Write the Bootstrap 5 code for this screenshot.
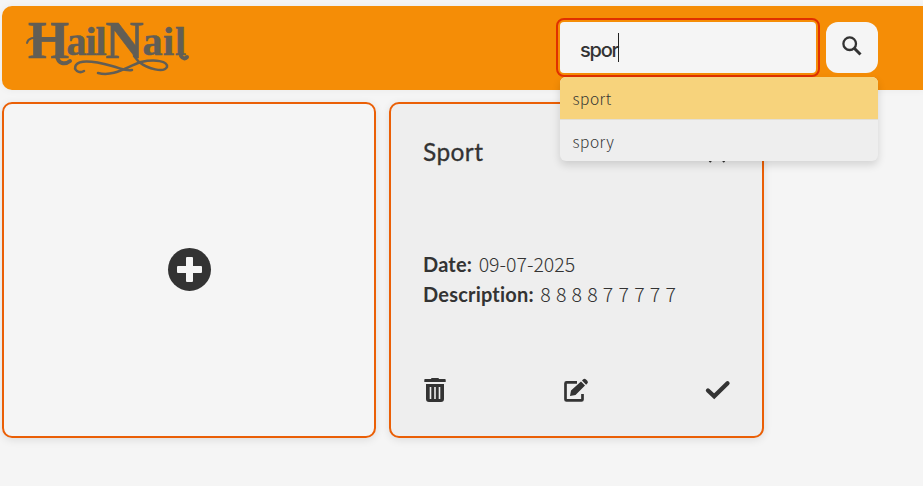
<!DOCTYPE html>
<html lang="en">
<head>
<meta charset="utf-8">
<meta name="viewport" content="width=device-width, initial-scale=1">
<title>HailNail</title>
<link href="https://cdn.jsdelivr.net/npm/bootstrap@5.3.0/dist/css/bootstrap.min.css" rel="stylesheet">
<style>
body{background:#f5f5f5;color:#333;font-family:"Noto Sans CJK JP",Lato,sans-serif;overflow:hidden;height:486px}
svg{overflow:visible}
.topbar{margin:6px 0 0 2px;height:84px;background:#f58d06;border-radius:10px 0 0 10px;padding:12px 45px 0 21px;box-shadow:0 0 8px rgba(0,0,0,.05)}
.logo{width:170px;height:62px}
.search{margin-top:4px;gap:10px;width:318px}
.query{width:256px;height:51px;background:#f5f5f5;border-radius:4px;outline:2px solid #e03000;outline-offset:2px;padding:4px 0 0 20px;font:500 20px Inter,sans-serif}
.query span{letter-spacing:-1.25px}
.caret{width:1px;height:29px;background:#222;margin-top:-5px}
.find{width:52px;height:51px;background:#f5f5f5;border-radius:12px;padding:0 0 6px}
.hints{position:absolute;top:55px;left:0;width:318px;z-index:5;border-radius:6px;overflow:hidden;background:#eee;box-shadow:0 4px 8px rgba(0,0,0,.14)}
.hints div{height:41px;padding:0 12.5px;font-size:15.5px;font-weight:300;line-height:42px;color:#333;letter-spacing:.5px}
.hints div:first-child{background:#f7d37c;height:43px;line-height:42px;border-bottom:1px solid #e3dfd4}
.tiles{margin:12px 0 0 2px;gap:13px}
.tile{width:374px;height:336px;border:2px solid #ea5f06;border-radius:10px;box-shadow:0 2px 8px rgba(0,0,0,.1)}
.note{width:375px;background:#eee;padding:32px}
.title{font-family:Lato,sans-serif;font-size:24.5px;line-height:32px;height:32px;letter-spacing:.4px;-webkit-text-stroke:.3px #333}
.facts{margin-top:81px;font-size:20px;line-height:30px}
.facts b{font-family:Lato,sans-serif;font-weight:700;letter-spacing:.2px}
.facts .d-flex{gap:6.5px}
.val{font-weight:300;font-size:19.5px;line-height:30px}
.v2{letter-spacing:-.1px;word-spacing:1.1px}
.tools{margin-top:68px}
</style>
</head>
<body>
<header class="topbar d-flex justify-content-between align-items-start">
  <svg class="logo" viewBox="23 18 170 62" fill="#625e55">
    <text y="58" font-family="Liberation Serif, serif" font-weight="bold" stroke="#625e55" stroke-width=".5" font-size="40"><tspan x="28" font-size="53">H</tspan><tspan x="66.500 85.500 95.500" dy="-3">ail</tspan><tspan x="105.500" dy="3" font-size="53">N</tspan><tspan x="142.500 163 175" dy="-3">ail</tspan></text>
    <g fill="none" stroke="#625e55" stroke-linecap="round">
      <path stroke-width="2" d="M27 43c1-5 7-6 12-5h18"/>
      <path stroke-width="4" d="M57 56c1 8 8 9 13 5M181 56c2 3 4 3 6 1"/>
      <path stroke-width="2.500" d="M84 71c-5 3-11-1-8-6 5-7 25-2 36 1s13 5 20 4"/>
      <path stroke-width="2.500" d="M98 73c16 4 28-6 43-11 14-3 27-1 26 5-3 6-19 2-28-5l-5-6"/>
    </g>
  </svg>
  <div class="search d-flex position-relative">
    <div class="query d-flex align-items-center"><span>spor</span><i class="caret"></i></div>
    <button class="find btn border-0" aria-label="Search"><svg width="22" height="22" viewBox="0 0 22 22" fill="none" stroke="#333"><circle cx="8.700" cy="8.700" r="6.300" stroke-width="2.300"/><path d="m13.500 13.500 6 6" stroke-width="3"/></svg></button>
    <div class="hints"><div>sport</div><div>spory</div></div>
  </div>
</header>
<main class="tiles d-flex">
  <section class="tile d-flex align-items-center justify-content-center">
    <svg class="mb-1" width="44" height="44" viewBox="0 0 44 44"><g transform="translate(.5 .9)"><circle cx="22" cy="22.500" r="21.500" fill="#333"/><path d="M19.500 10h5q1 0 1 1v8h8q1 0 1 1v5q0 1-1 1h-8v8q0 1-1 1h-5q-1 0-1-1v-8h-8q-1 0-1-1v-5q0-1 1-1h8v-8q0-1 1-1z" fill="#f5f5f5"/></g></svg>
  </section>
  <section class="tile note">
    <div class="d-flex justify-content-between"><span class="title">Sport</span>
      <svg width="26" height="26" viewBox="0 0 26 26" fill="none" stroke="#333" stroke-width="2"><path d="m5.500 26 7.500-7.500 7.500 7.500"/></svg>
    </div>
    <div class="facts">
      <div class="d-flex"><b>Date:</b><span class="val">09-07-2025</span></div>
      <div class="d-flex"><b>Description:</b><span class="val v2">8 8 8 8 7 7 7 7 7</span></div>
    </div>
    <div class="tools d-flex justify-content-between">
      <svg width="24" height="26" viewBox="0 0 24 26"><path fill="#333" d="M8 2q0-1 1-1h6q1 0 1 1h6q.7 0 .7 1v2H1.300V3q0-1 .7-1zM3 7h18v15q0 3-3 3H6q-3 0-3-3z"/><path stroke="#eee" stroke-width="1.600" d="M7.500 10v12M12 10v12M16.500 10v12"/></svg>
      <svg width="26" height="26" viewBox="0 0 26 26"><path fill="none" stroke="#333" stroke-width="2.700" d="M14 5.400H3.500q-1 0-1 1v16q0 1 1 1h15q1 0 1-1V17"/><path fill="#333" d="m18 4.500 4 4L12.500 18 7 19l1-5.500zM19 3.500l1-1q1.500-1.500 3 0l1.300 1.300q1.400 1.400 0 2.800l-1.200 1.200z"/></svg>
      <svg width="25" height="26" viewBox="0 0 25 26"><path d="m3 13.500 6.200 5.800L22.500 6.200" fill="none" stroke="#333" stroke-width="4.300" stroke-linecap="round"/></svg>
    </div>
  </section>
</main>
<script src="https://cdn.jsdelivr.net/npm/bootstrap@5.3.0/dist/js/bootstrap.bundle.min.js"></script>
</body>
</html>
